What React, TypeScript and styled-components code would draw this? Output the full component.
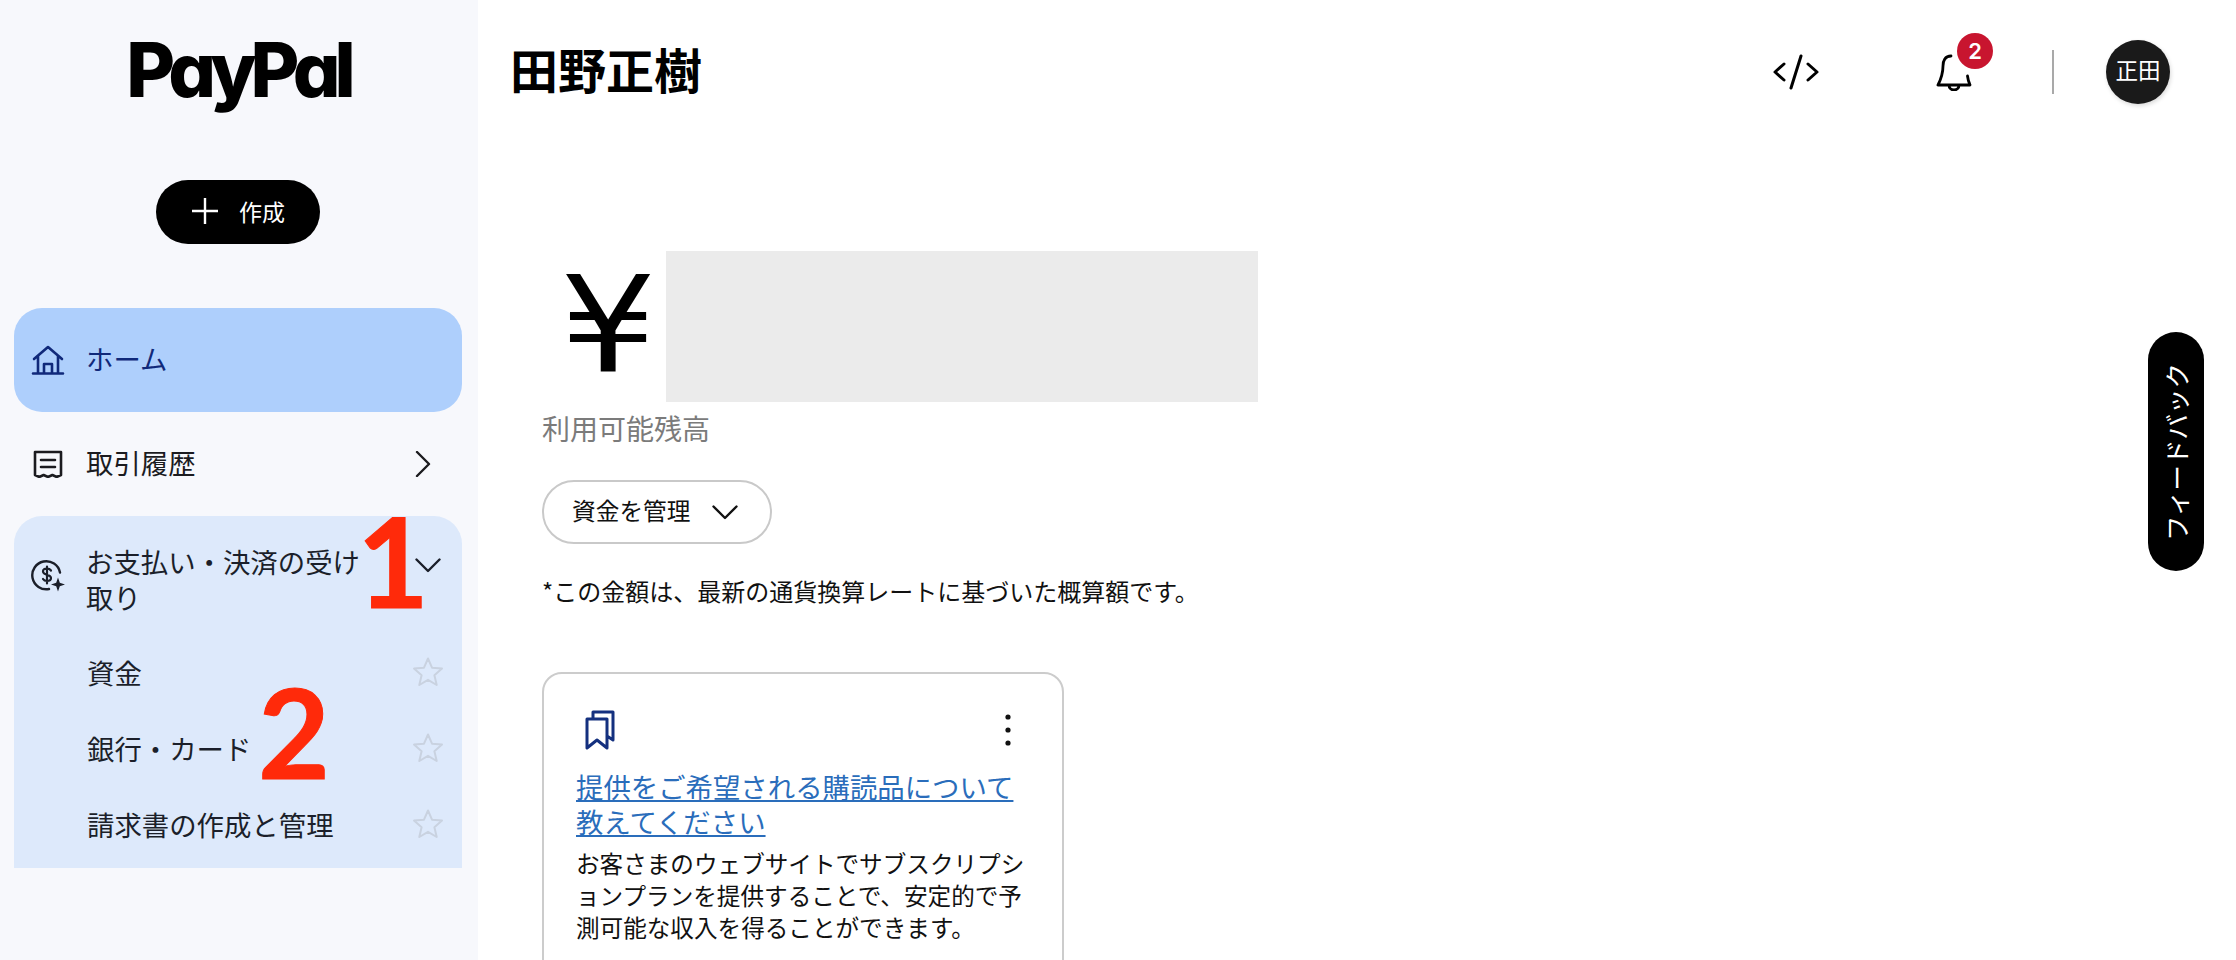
import styled, { createGlobalStyle } from 'styled-components'

const jp = `"Noto Sans CJK JP", "Noto Sans", sans-serif`

const GlobalStyle = createGlobalStyle`
  html, body {
    margin: 0;
    padding: 0;
    background: #fff;
    font-family: ${jp};
  }
`

const Page = styled.div`
  display: flex;
  height: 960px;
  overflow: hidden;
  position: relative;
`

const Sidebar = styled.aside`
  width: 478px;
  flex: none;
  box-sizing: border-box;
  padding: 0 16px 0 14px;
  background: #f7f8fc;
  display: flex;
  flex-direction: column;
`

const LogoRow = styled.div`
  height: 180px;
  box-sizing: border-box;
  padding-top: 23px;
  text-align: center;
`

const Logo = styled.span`
  font-family: Inter, sans-serif;
  font-feature-settings: 'cv11' 1;
  font-weight: 800;
  font-size: 75px;
  line-height: 94px;
  letter-spacing: -6px;
  color: #000;
`

const CreateRow = styled.div`
  display: flex;
  justify-content: center;
  margin-bottom: 64px;
`

const CreateButton = styled.button`
  width: 164px;
  height: 64px;
  border: none;
  border-radius: 32px;
  background: #000;
  color: #fff;
  display: flex;
  align-items: center;
  justify-content: center;
  gap: 20px;
  padding: 0 0 2px;
  font-family: ${jp};
  font-size: 23px;
`

const NavRow = styled.div<{ $active?: boolean }>`
  height: 104px;
  display: flex;
  align-items: center;
  padding: 0 26px 0 17px;
  border-radius: 28px;
  background: ${({ $active }) => ($active ? '#aecffc' : 'transparent')};
  color: ${({ $active }) => ($active ? '#10297a' : '#1b1b1f')};
  font-size: 27.4px;
`

const NavIcon = styled.span`
  width: 34px;
  flex: none;
  margin-right: 21px;
  display: flex;
  justify-content: center;
`

const NavLabel = styled.span`
  flex: 1;
  padding-bottom: 5px;
`

const Group = styled.div`
  height: 352px;
  overflow: hidden;
  background: #dde9fb;
  border-radius: 28px 28px 0 0;
  color: #1b1f2a;
  font-size: 27.4px;
`

const GroupHead = styled.div`
  height: 119px;
  display: flex;
  align-items: center;
  padding: 0 21px 0 17px;
`

const GroupLabel = styled.span`
  line-height: 36px;
  margin-top: 7px;
  max-width: 290px;
`

const GroupChevron = styled.span`
  margin-left: auto;
  margin-top: -21px;
  display: flex;
`

const SubRow = styled.div`
  height: 76px;
  box-sizing: border-box;
  display: flex;
  align-items: center;
  justify-content: space-between;
  padding: 0 18px 3px 73px;
`

const Annotation = styled.span<{ $left: number; $top: number }>`
  position: absolute;
  left: ${({ $left }) => $left}px;
  top: ${({ $top }) => $top}px;
  font-family: Lato, sans-serif;
  font-weight: 700;
  font-size: 124px;
  line-height: 124px;
  -webkit-text-stroke: 1px #ff2a0a;
  color: #ff2a0a;
`

const Main = styled.main`
  flex: 1;
  min-width: 0;
`

const Header = styled.header`
  height: 144px;
  display: flex;
  align-items: center;
  padding: 0 66px 0 32px;
`

const Title = styled.h1`
  margin: 0 auto 9px 0;
  font-size: 48px;
  font-weight: 700;
  color: #000;
`

const ToolIcon = styled.span<{ $gap: number }>`
  display: flex;
  margin-right: ${({ $gap }) => $gap}px;
  position: relative;
`

const Badge = styled.span`
  position: absolute;
  left: 21px;
  top: -20px;
  width: 36px;
  height: 36px;
  border-radius: 50%;
  background: #c8152f;
  color: #fff;
  font-family: Inter, sans-serif;
  font-size: 22px;
  font-weight: 600;
  line-height: 36px;
  text-align: center;
`

const Divider = styled.span`
  width: 2px;
  height: 44px;
  background: #a9a9a9;
  margin-right: 52px;
`

const Avatar = styled.span`
  width: 64px;
  height: 64px;
  border-radius: 50%;
  background: #1a1a1a;
  color: #fff;
  font-size: 22.5px;
  line-height: 59px;
  text-align: center;
  box-shadow: 1px 2px 4px rgba(0, 0, 0, 0.15);
`

const Content = styled.section`
  padding: 107px 0 0 64px;
`

const BalanceRow = styled.div`
  display: flex;
  align-items: center;
  height: 151px;
`

const Currency = styled.div`
  width: 124px;
  padding-left: 18px;
  box-sizing: border-box;
`

const CurrencyGlyph = styled.span`
  display: inline-block;
  font-family: "DejaVu Sans", sans-serif;
  font-size: 134px;
  line-height: 151px;
  color: #000;
  transform: scaleX(1.13);
  transform-origin: left center;
`

const Masked = styled.div`
  width: 592px;
  height: 151px;
  background: #ebebeb;
`

const BalanceLabel = styled.div`
  margin-top: 6px;
  font-size: 28px;
  line-height: 40px;
  color: #7b7b7b;
`

const ManageButton = styled.button`
  margin-top: 32px;
  width: 230px;
  height: 64px;
  box-sizing: border-box;
  border: 2px solid #c9c9c9;
  border-radius: 32px;
  background: #fff;
  color: #111;
  display: flex;
  align-items: center;
  gap: 22px;
  padding: 0 0 0 28px;
  font-family: ${jp};
  font-size: 23.7px;
`

const ManageLabel = styled.span`
  padding-bottom: 4px;
`

const Note = styled.p`
  margin: 29px 0 0;
  font-size: 24px;
  line-height: 36px;
  color: #111;
`

const Card = styled.article`
  margin-top: 63px;
  width: 522px;
  height: 400px;
  box-sizing: border-box;
  padding: 36px 24px 0 32px;
  border: 2px solid #cccccc;
  border-radius: 20px;
`

const CardTop = styled.div`
  display: flex;
  justify-content: space-between;
  align-items: center;
  padding: 0 26px 0 9px;
  margin-bottom: 19px;
`

const CardLink = styled.a`
  display: block;
  font-size: 27.4px;
  line-height: 35px;
  color: #2a6dbb;
  text-decoration: underline;
`

const CardBody = styled.p`
  margin: 8px 0 0;
  font-size: 23.6px;
  line-height: 32px;
  color: #111;
`

const Feedback = styled.button`
  position: absolute;
  right: 32px;
  top: 332px;
  width: 56px;
  height: 239px;
  border: none;
  border-radius: 28px;
  background: #000;
  color: #fff;
  padding: 0 2px 0 0;
  display: flex;
  align-items: center;
  justify-content: center;
  font-family: ${jp};
  font-size: 25.5px;
`

const FeedbackText = styled.span`
  writing-mode: vertical-rl;
  text-orientation: sideways;
  transform: rotate(180deg);
`

const Stroke = styled.svg`
  display: block;
  fill: none;
  stroke: currentColor;
  stroke-linecap: round;
  stroke-linejoin: round;
`

const StarIcon = () => (
  <Stroke width="32" height="32" viewBox="0 0 32 32" strokeWidth="2" style={{ color: '#c9d2e0' }}>
    <path d="M16 2.500l4 9.200 10 .9-7.600 6.600 2.300 9.800L16 23.800 7.300 29l2.300-9.800L2 12.600l10-.9z" />
  </Stroke>
)

const Chevron = ({ dir, size = 26, color }: { dir: 'down' | 'right'; size?: number; color?: string }) => (
  <Stroke width={size} height={size} viewBox="0 0 26 26" strokeWidth="2.400" style={{ color }}>
    {dir === 'down' ? <path d="M1.500 7.500 13 19 24.500 7.500" /> : <path d="M7 1 19 13 7 25" />}
  </Stroke>
)

export default function App() {
  return (
    <Page>
      <GlobalStyle />
      <Sidebar>
        <LogoRow>
          <Logo>PayPal</Logo>
        </LogoRow>
        <CreateRow>
          <CreateButton>
            <Stroke width="28" height="28" viewBox="0 0 28 28" strokeWidth="2.400">
              <path d="M14 1v26M1 14h26" strokeLinecap="butt" />
            </Stroke>
            作成
          </CreateButton>
        </CreateRow>
        <NavRow $active>
          <NavIcon>
            <Stroke width="34" height="30" viewBox="0 0 34 30" strokeWidth="2.600">
              <path d="M3 14 17 2l14 12M7 11V28M27 11V28M2 28.500h30M13 28v-9h8v9" />
            </Stroke>
          </NavIcon>
          <NavLabel>ホーム</NavLabel>
        </NavRow>
        <NavRow>
          <NavIcon>
            <Stroke width="30" height="28" viewBox="0 0 30 28" strokeWidth="2.600">
              <path d="M2 25V2h26v23l-4.300 2-4.300-2-4.400 2-4.400-2-4.300 2zM8 10h14M8 17h14" />
            </Stroke>
          </NavIcon>
          <NavLabel>取引履歴</NavLabel>
          <Chevron dir="right" />
        </NavRow>
        <Group>
          <GroupHead>
            <NavIcon>
              <Stroke width="34" height="34" viewBox="0 0 34 34" strokeWidth="2.400">
                <path d="M29 13.500A14 14 0 1 0 18 30" />
                <path d="M20 11.500c-1-1.400-2.400-2-4-2-2.300 0-4 1.200-4 3 0 4 8 2.500 8 6.500 0 1.800-1.700 3-4 3-1.700 0-3.200-.7-4-2M16 7.500v17" strokeWidth="2.200" />
                <path d="M27 18.500l1.800 5.200 5.200 1.800-5.200 1.800-1.800 5.200-1.800-5.200-5.200-1.800 5.200-1.800z" fill="currentColor" stroke="none" />
              </Stroke>
            </NavIcon>
            <GroupLabel>お支払い・決済の受け取り</GroupLabel>
            <GroupChevron>
              <Chevron dir="down" />
            </GroupChevron>
          </GroupHead>
          <SubRow>
            資金
            <StarIcon />
          </SubRow>
          <SubRow>
            銀行・カード
            <StarIcon />
          </SubRow>
          <SubRow>
            請求書の作成と管理
            <StarIcon />
          </SubRow>
        </Group>
      </Sidebar>
      <Main>
        <Header>
          <Title>田野正樹</Title>
          <ToolIcon $gap={117}>
            <Stroke width="46" height="36" viewBox="0 0 46 36" strokeWidth="3">
              <path d="M11 10 2 18l9 8M35 10l9 8-9 8M28 2 18 34" />
            </Stroke>
          </ToolIcon>
          <ToolIcon $gap={80}>
            <Stroke width="36" height="38" viewBox="0 0 36 38" strokeWidth="2.800">
              <path d="M15 3C9 3 7 8 7 13c0 7-2 13-5 19h32c-1-2-2-5-2.500-9M13 32c0 3 2 5 5 5s5-2 5-5" />
            </Stroke>
            <Badge>2</Badge>
          </ToolIcon>
          <Divider />
          <Avatar>正田</Avatar>
        </Header>
        <Content>
          <BalanceRow>
            <Currency>
              <CurrencyGlyph>¥</CurrencyGlyph>
            </Currency>
            <Masked />
          </BalanceRow>
          <BalanceLabel>利用可能残高</BalanceLabel>
          <ManageButton>
            <ManageLabel>資金を管理</ManageLabel>
            <Chevron dir="down" />
          </ManageButton>
          <Note>*この金額は、最新の通貨換算レートに基づいた概算額です。</Note>
          <Card>
            <CardTop>
              <Stroke width="30" height="40" viewBox="0 0 30 40" strokeWidth="3" style={{ color: '#14307f' }}>
                <path d="M2 9h20v29l-10-8-10 8zM8 9V2h20v28l-6-4" />
              </Stroke>
              <Stroke width="8" height="34" viewBox="0 0 8 34" style={{ color: '#111' }}>
                <g fill="currentColor" stroke="none">
                  <circle cx="4" cy="4" r="2.600" />
                  <circle cx="4" cy="17" r="2.600" />
                  <circle cx="4" cy="30" r="2.600" />
                </g>
              </Stroke>
            </CardTop>
            <CardLink>提供をご希望される購読品について教えてください</CardLink>
            <CardBody>お客さまのウェブサイトでサブスクリプションプランを提供することで、安定的で予測可能な収入を得ることができます。</CardBody>
          </Card>
        </Content>
      </Main>
      <Annotation $left={357} $top={498}>1</Annotation>
      <Annotation $left={258} $top={669}>2</Annotation>
      <Feedback>
        <FeedbackText>フィードバック</FeedbackText>
      </Feedback>
    </Page>
  )
}
